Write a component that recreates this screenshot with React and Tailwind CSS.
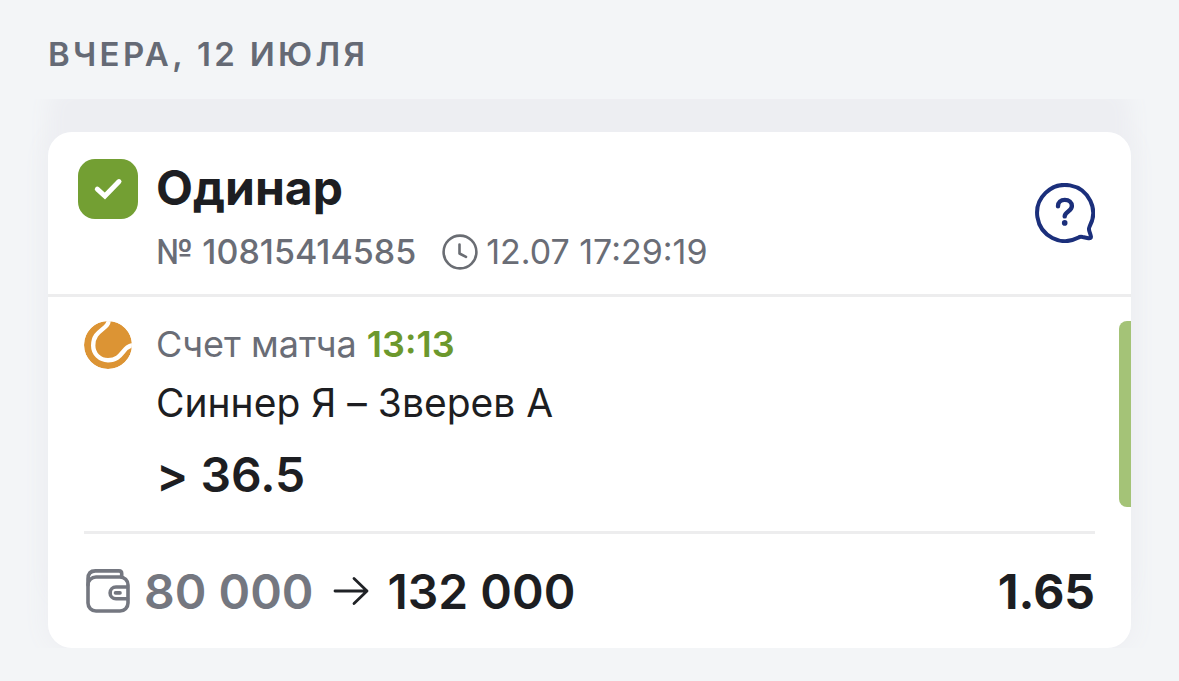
function CheckBadge() {
  return (
    <svg viewBox="0 0 60 60" className="size-[60px] shrink-0" role="img" aria-label="Выигрыш">
      <rect width="60" height="60" rx="17" fill="#739f33" />
      <path d="M19.300 30.200l7.600 6.800L41 22.600" fill="none" stroke="#fff" strokeWidth="5" strokeLinecap="round" strokeLinejoin="miter" />
    </svg>
  );
}

function ClockIcon() {
  return (
    <svg viewBox="0 0 36 36" className="size-9 shrink-0" fill="none" stroke="#6a6d73" strokeWidth="2.600" strokeLinecap="round" strokeLinejoin="round" aria-hidden="true">
      <circle cx="18" cy="18" r="16.400" />
      <path d="M17.500 10.500v9l6.500 3.400" />
    </svg>
  );
}

function HelpIcon() {
  return (
    <svg viewBox="0 0 60 60" className="size-[60px]" fill="none" stroke="#1b2f7b" strokeWidth="4" strokeLinecap="round" strokeLinejoin="round" aria-hidden="true">
      <path d="M54.600 43.500A28 28 0 1 0 43 54.800Q45 53.400 47.500 54L53.500 55.200Q56.300 55.600 55.900 53.300Q55.700 52 54.400 48.300Q53.500 45.800 54.600 43.500Z" />
      <path d="M23 23.200C23 19.400 25.800 16.900 29.800 16.900C34 16.900 36.900 19.400 36.900 23.100C36.900 28.200 29.700 28.700 29.700 33.400" strokeWidth="4.400" />
      <circle cx="29.700" cy="39.900" r="2.800" fill="#1b2f7b" stroke="none" />
    </svg>
  );
}

function TennisIcon() {
  return (
    <svg viewBox="0 0 48 48" className="size-12 shrink-0" fill="none" role="img" aria-label="Теннис">
      <defs>
        <clipPath id="ball">
          <circle cx="24" cy="24" r="24" />
        </clipPath>
      </defs>
      <g clipPath="url(#ball)">
        <circle cx="24" cy="24" r="24" fill="#dc9434" />
        <path d="M24.700 -2C25.500 9 9.200 8 9.200 24.500C9.200 33 15.800 39.200 24 39.200C39.500 39.200 38 24.600 50 24" stroke="#fff" strokeWidth="4.400" />
      </g>
    </svg>
  );
}

function WalletIcon() {
  return (
    <svg viewBox="0 0 48 48" className="size-12 shrink-0" fill="none" stroke="#747780" strokeWidth="3.600" strokeLinejoin="round" strokeLinecap="round" aria-hidden="true">
      <rect x="4" y="9" width="40" height="34" rx="8" />
      <path d="M4 17V11C4 5.500 6.900 2.900 11.400 2.900H35Q37.700 2.900 37.700 5.600V9" />
      <path d="M43.500 19H32a5.900 5.900 0 0 0 0 11.800H43.500" />
      <path d="M31.500 24.900H36" />
    </svg>
  );
}

function ArrowIcon() {
  return (
    <svg viewBox="0 0 36 36" className="size-9 shrink-0" fill="none" stroke="#202226" strokeWidth="2.800" strokeLinecap="round" strokeLinejoin="round" role="img" aria-label="выплата">
      <path d="M2 17H34M21 4.500L34 17L21 29.500" />
    </svg>
  );
}

function BetCard() {
  return (
    <article className="overflow-hidden rounded-3xl bg-white">
      <header className="flex items-start justify-between border-b-3 border-[#ededee] pt-[27px] pr-9 pb-6 pl-[30px]">
        <div>
          <div className="flex items-start gap-[18px]">
            <CheckBadge />
            <h2 className="text-[48px] leading-[58px] font-bold">Одинар</h2>
          </div>
          <div className="mt-[15px] ml-[78px] flex items-center text-[34px] leading-9 text-[#6a6d76]">
            <span className="font-medium">№ 10815414585</span>
            <span className="ml-[26px] flex items-center gap-2">
              <ClockIcon />
              <time dateTime="07-12T17:29:19">12.07 17:29:19</time>
            </span>
          </div>
        </div>
        <button type="button" aria-label="Помощь" className="mt-6">
          <HelpIcon />
        </button>
      </header>

      <div className="flex items-stretch justify-between py-6 pl-9">
        <div className="flex gap-6">
          <TennisIcon />
          <div>
            <p className="text-[36px] leading-[46px] text-[#6a6d76]">
              Счет матча <span className="font-semibold text-[#6c982d]">13:13</span>
            </p>
            <p className="mt-3 text-[39px] leading-[48px] [font-feature-settings:'calt'_0]">Синнер Я – Зверев А</p>
            <p className="mt-[18px] text-[48px] leading-[60px] font-semibold [font-feature-settings:'calt'_0]">&gt; 36.5</p>
          </div>
        </div>
        <div className="-mb-0.5 w-3 rounded-l-lg bg-[#a4c377]" />
      </div>

      <footer className="mx-9 mt-0.5 flex items-center justify-between border-t-3 border-[#ededee] pt-7 pb-[26px] text-[48px] leading-[60px] font-semibold">
        <div className="flex items-center">
          <WalletIcon />
          <span className="ml-3 text-[#747780]">80 000</span>
          <span className="mr-[18px] ml-5 flex">
            <ArrowIcon />
          </span>
          <span>132 000</span>
        </div>
        <span className="font-bold">1.65</span>
      </footer>
    </article>
  );
}

export default function App() {
  return (
    <main className="min-h-screen bg-[#f3f5f7] font-['Inter',sans-serif] text-[#1d1e22]">
      <h1 className="px-12 pt-8 pb-[23px] text-[33px] leading-[44px] font-semibold tracking-widest text-[#656a75] uppercase">
        Вчера, 12 июля
      </h1>
      <section className="overflow-hidden px-12 pt-[33px]">
        <div className="rounded-3xl shadow-[0_-48px_20px_0_#edeef2,0_0_24px_2px_#edeef2]">
          <BetCard />
        </div>
      </section>
    </main>
  );
}
